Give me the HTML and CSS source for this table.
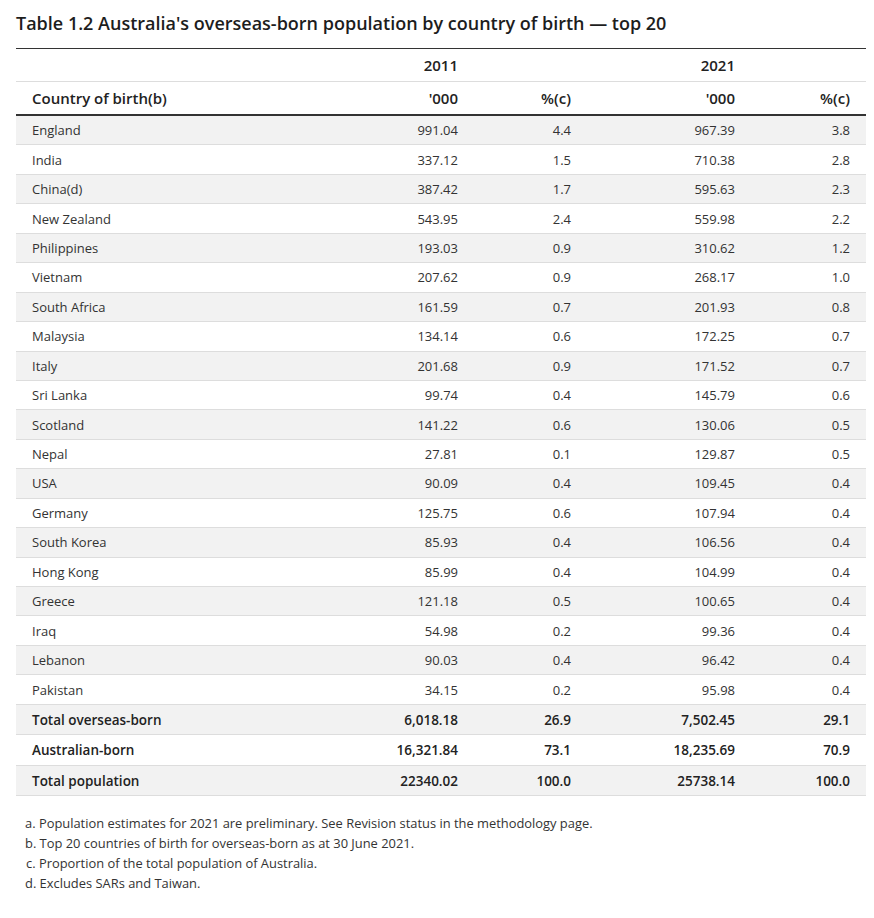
FILE: index.html
```html
<!DOCTYPE html>
<html lang="en">
<head>
<meta charset="utf-8">
<title>Table 1.2</title>
<link rel="stylesheet" href="styles.css">
</head>
<body>
<main class="wrap">
  <h2 class="title">Table 1.2 Australia's overseas-born population by country of birth — top 20</h2>
  <table class="data">
    <colgroup>
      <col class="c1"><col class="c2"><col class="c3"><col class="c4"><col class="c5">
    </colgroup>
    <thead>
      <tr class="years"><th></th><th class="num">2011</th><th></th><th class="num">2021</th><th></th></tr>
      <tr class="units"><th class="lbl">Country of birth(b)</th><th class="num">'000</th><th class="num">%(c)</th><th class="num">'000</th><th class="num">%(c)</th></tr>
    </thead>
    <tbody>
      <tr><td>England</td><td>991.04</td><td>4.4</td><td>967.39</td><td>3.8</td></tr>
      <tr><td>India</td><td>337.12</td><td>1.5</td><td>710.38</td><td>2.8</td></tr>
      <tr><td>China(d)</td><td>387.42</td><td>1.7</td><td>595.63</td><td>2.3</td></tr>
      <tr><td>New Zealand</td><td>543.95</td><td>2.4</td><td>559.98</td><td>2.2</td></tr>
      <tr><td>Philippines</td><td>193.03</td><td>0.9</td><td>310.62</td><td>1.2</td></tr>
      <tr><td>Vietnam</td><td>207.62</td><td>0.9</td><td>268.17</td><td>1.0</td></tr>
      <tr><td>South Africa</td><td>161.59</td><td>0.7</td><td>201.93</td><td>0.8</td></tr>
      <tr><td>Malaysia</td><td>134.14</td><td>0.6</td><td>172.25</td><td>0.7</td></tr>
      <tr><td>Italy</td><td>201.68</td><td>0.9</td><td>171.52</td><td>0.7</td></tr>
      <tr><td>Sri Lanka</td><td>99.74</td><td>0.4</td><td>145.79</td><td>0.6</td></tr>
      <tr><td>Scotland</td><td>141.22</td><td>0.6</td><td>130.06</td><td>0.5</td></tr>
      <tr><td>Nepal</td><td>27.81</td><td>0.1</td><td>129.87</td><td>0.5</td></tr>
      <tr><td>USA</td><td>90.09</td><td>0.4</td><td>109.45</td><td>0.4</td></tr>
      <tr><td>Germany</td><td>125.75</td><td>0.6</td><td>107.94</td><td>0.4</td></tr>
      <tr><td>South Korea</td><td>85.93</td><td>0.4</td><td>106.56</td><td>0.4</td></tr>
      <tr><td>Hong Kong</td><td>85.99</td><td>0.4</td><td>104.99</td><td>0.4</td></tr>
      <tr><td>Greece</td><td>121.18</td><td>0.5</td><td>100.65</td><td>0.4</td></tr>
      <tr><td>Iraq</td><td>54.98</td><td>0.2</td><td>99.36</td><td>0.4</td></tr>
      <tr><td>Lebanon</td><td>90.03</td><td>0.4</td><td>96.42</td><td>0.4</td></tr>
      <tr><td>Pakistan</td><td>34.15</td><td>0.2</td><td>95.98</td><td>0.4</td></tr>
    </tbody>
    <tbody class="totals">
      <tr><td>Total overseas-born</td><td>6,018.18</td><td>26.9</td><td>7,502.45</td><td>29.1</td></tr>
      <tr><td>Australian-born</td><td>16,321.84</td><td>73.1</td><td>18,235.69</td><td>70.9</td></tr>
      <tr><td>Total population</td><td>22340.02</td><td>100.0</td><td>25738.14</td><td>100.0</td></tr>
    </tbody>
  </table>
  <ol class="notes">
    <li>a. Population estimates for 2021 are preliminary. See Revision status in the methodology page.</li>
    <li>b. Top 20 countries of birth for overseas-born as at 30 June 2021.</li>
    <li>c. Proportion of the total population of Australia.</li>
    <li>d. Excludes SARs and Taiwan.</li>
  </ol>
</main>
</body>
</html>
```

FILE: styles.css
```css
html, body {
  margin: 0;
  padding: 0;
  background: #ffffff;
}
body {
  font-family: "Open Sans", "Noto Sans", "Liberation Sans", sans-serif;
  color: #333333;
}
.wrap {
  padding: 0 8px 0 16px;
}
.title {
  margin: 0;
  padding-top: 11px;
  height: 48px;
  box-sizing: border-box;
  font-size: 18px;
  font-weight: 600;
  line-height: 24px;
  color: #1d1d1d;
}
.data {
  width: 850px;
  border-collapse: collapse;
  table-layout: fixed;
  border-top: 1px solid #333333;
  font-size: 13px;
}
.c1 { width: 294px; }
.c2 { width: 164px; }
.c3 { width: 113px; }
.c4 { width: 164px; }
.c5 { width: 115px; }
.data th {
  font-weight: 600;
  font-size: 15px;
  color: #222222;
  padding: 0 16px;
  text-align: left;
}
.data th.num { text-align: right; }
.years th {
  height: 32px;
  border-bottom: 1px solid #dddddd;
}
.units th {
  height: 32px;
  border-bottom: 2px solid #333333;
}
.data td {
  height: 28.45px;
  padding: 0 16px;
  border-bottom: 1px solid #dddddd;
  text-align: right;
  color: #333333;
}
.data td:first-child { text-align: left; }
.data tbody tr:nth-child(odd) td { background: #f2f2f2; }
.totals td {
  height: 29.5px;
  font-weight: 600;
  font-size: 13.5px;
  color: #222222;
}
.notes {
  list-style: none;
  margin: 0;
  padding: 17px 0 0 9px;
  font-size: 12.9px;
  line-height: 20px;
  color: #333333;
}
.notes li:nth-child(3) { padding-left: 1px; }
```
